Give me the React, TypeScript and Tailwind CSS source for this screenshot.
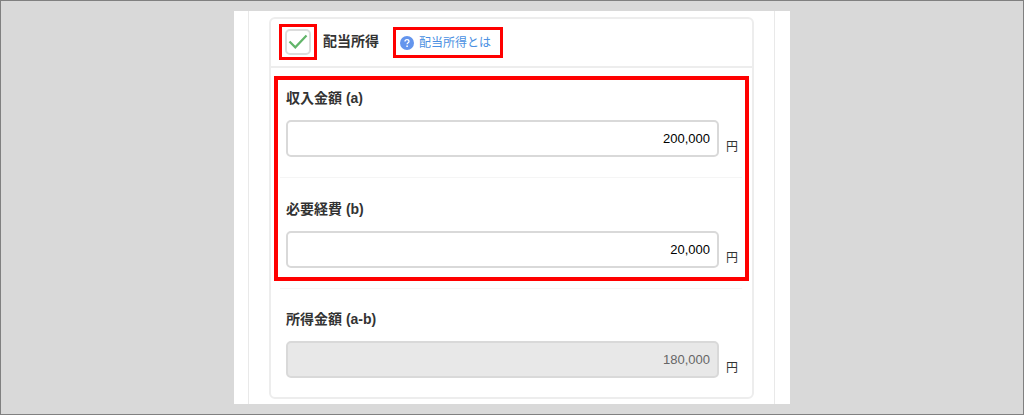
type FieldProps = {
  id: string;
  label: string;
  value: string;
  disabled?: boolean;
};

function AmountField({ id, label, value, disabled }: FieldProps) {
  return (
    <div>
      <label htmlFor={id} className="block text-sm leading-5 font-bold text-[#333]">
        {label}
      </label>
      <div className="mt-3 flex items-end">
        <input
          id={id}
          type="text"
          defaultValue={value}
          disabled={disabled}
          className="h-[37px] min-w-0 flex-1 rounded-[5px] border-2 border-[#d9d9d9] bg-white px-[7px] text-right text-[13px] text-black disabled:bg-[#e8e8e8] disabled:text-[#666]"
        />
        <span className="ml-[7px] w-3 text-xs leading-5 text-[#333]">円</span>
      </div>
    </div>
  );
}

export default function App() {
  return (
    <div className="border border-[#808080] bg-[#d9d9d9] py-[10px] font-['Liberation_Sans','Noto_Sans_CJK_JP',sans-serif]">
      <main className="mx-auto w-full max-w-[556px] bg-white pr-[15px] pl-[14px]">
        <div className="border-x border-[#e9e9e9] px-5 pt-[6px] pb-[5px]">
          <section className="rounded-md border-2 border-[#ededed]">
            <header className="flex items-start border-b-2 border-[#ededed] pt-[5px] pb-[6px] pl-2">
              <div className="flex border-3 border-[#ff0000] px-[3px] py-[2px]">
                <span className="relative flex">
                  <input
                    id="dividend"
                    type="checkbox"
                    defaultChecked
                    className="peer size-[26px] appearance-none rounded-[5px] border-2 border-[#dcdcdc] bg-white"
                  />
                  <svg
                    viewBox="0 0 26 26"
                    className="pointer-events-none absolute inset-0 hidden size-[26px] peer-checked:block"
                    fill="none"
                    stroke="#62b56a"
                    strokeWidth="2.2"
                    aria-hidden="true"
                  >
                    <path d="M4.5 12.5l5.8 5.8L21.5 6.5" />
                  </svg>
                </span>
              </div>
              <label htmlFor="dividend" className="mt-[7px] ml-[6px] text-sm leading-5 font-bold text-[#333]">
                配当所得
              </label>
              <a
                href="#dividend-help"
                className="mt-[3px] ml-[14px] flex h-[31px] items-center gap-[5px] border-3 border-[#ff0000] pr-[9px] pl-1 text-xs leading-5 text-[#4a90e2]"
              >
                <svg viewBox="0 0 14 14" className="size-[14px]" aria-hidden="true">
                  <circle cx="7" cy="7" r="7" fill="#6495ed" />
                  <path
                    d="M5 5.6C5 4.3 5.9 3.6 7 3.6s2 .7 2 1.8c0 1.4-1.9 1.5-1.9 2.9"
                    fill="none"
                    stroke="#fff"
                    strokeWidth="1.3"
                  />
                  <circle cx="7.1" cy="10.2" r=".85" fill="#fff" />
                </svg>
                配当所得とは
              </a>
            </header>
            <div className="px-[3px] pt-2">
              <div className="border-4 border-[#ff0000] pt-2 pr-[7px] pb-[9px] pl-2">
                <AmountField id="income" label="収入金額 (a)" value="200,000" />
                <hr className="mt-5 -mr-1 mb-[21px] -ml-[6px] border-[#f5f5f5]" />
                <AmountField id="expense" label="必要経費 (b)" value="20,000" />
              </div>
            </div>
            <hr className="mt-[7px] mr-[10px] ml-[9px] border-[#f5f5f5]" />
            <div className="pt-5 pr-[14px] pb-[19px] pl-[15px]">
              <AmountField id="net" label="所得金額 (a-b)" value="180,000" disabled />
            </div>
          </section>
        </div>
      </main>
    </div>
  );
}
